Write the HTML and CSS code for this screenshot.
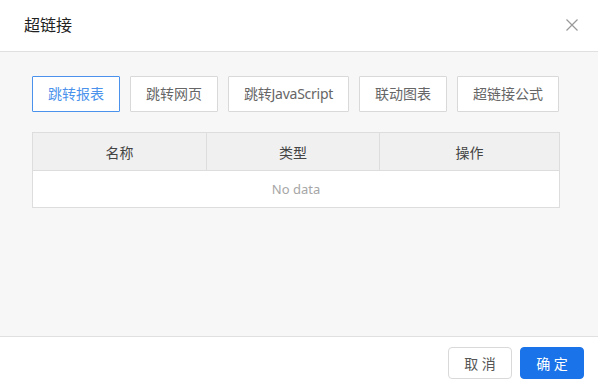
FILE: index.html
```html
<!DOCTYPE html>
<html lang="zh">
<head>
<meta charset="utf-8">
<title>超链接</title>
<link rel="stylesheet" href="styles.css">
</head>
<body>
<div class="dialog">
  <div class="header">
    <span class="title">超链接</span>
    <span class="close">
      <svg width="12" height="12" viewBox="0 0 12 12"><path d="M0.5 0.5 L11.5 11.5 M11.5 0.5 L0.5 11.5" stroke="#999" stroke-width="1.2" fill="none"/></svg>
    </span>
  </div>
  <div class="body">
    <div class="tabs">
      <button class="tab active">跳转报表</button>
      <button class="tab">跳转网页</button>
      <button class="tab tab-latin">跳转JavaScript</button>
      <button class="tab">联动图表</button>
      <button class="tab">超链接公式</button>
    </div>
    <div class="table">
      <div class="row head">
        <div class="cell">名称</div>
        <div class="cell">类型</div>
        <div class="cell">操作</div>
      </div>
      <div class="empty">No data</div>
    </div>
  </div>
  <div class="footer">
    <button class="btn">取 消</button>
    <button class="btn primary">确 定</button>
  </div>
</div>
</body>
</html>
```

FILE: styles.css
```css
* { box-sizing: border-box; }
html, body { margin: 0; padding: 0; }
body {
  width: 598px;
  height: 385px;
  overflow: hidden;
  font-family: "Noto Sans", "Noto Sans CJK SC", sans-serif;
  background: #fff;
}
.dialog {
  display: flex;
  flex-direction: column;
  height: 385px;
}
.header {
  height: 52px;
  border-bottom: 1px solid #e0e0e0;
  display: flex;
  align-items: center;
  justify-content: space-between;
  padding: 0 20px 0 24px;
  background: #fff;
}
.title {
  font-size: 16px;
  color: #222;
  font-weight: 400;
  line-height: 20px;
  margin-top: -2px;
}
.close {
  display: flex;
  width: 12px;
  height: 12px;
  margin-top: -2px;
}
.body {
  flex: 0 0 285px;
  background: #f7f7f7;
  padding: 24px 0 0 32px;
  border-bottom: 1px solid #e0e0e0;
}
.tabs {
  display: flex;
  gap: 10px;
}
.tab {
  flex: 0 0 auto;
  white-space: nowrap;
  height: 36px;
  padding: 0 15px;
  border: 1px solid #d9d9d9;
  background: #fff;
  font-family: inherit;
  font-size: 14px;
  color: #666;
  border-radius: 1px;
  line-height: 34px;
}
.tab-latin {
  letter-spacing: -0.25px;
}
.tab.active {
  border-color: #4a92ec;
  color: #4a92ec;
}
.table {
  margin-top: 20px;
  width: 528px;
  border: 1px solid #ddd;
  background: #fff;
}
.row.head {
  display: grid;
  grid-template-columns: 173px 173px 1fr;
  background: #f0f0f0;
  border-bottom: 1px solid #ddd;
  height: 38px;
}
.cell {
  display: flex;
  align-items: center;
  justify-content: center;
  font-size: 14px;
  color: #444;
  border-left: 1px solid #ddd;
}
.cell:first-child { border-left: none; }
.empty {
  height: 36px;
  display: flex;
  align-items: center;
  justify-content: center;
  font-size: 13px;
  color: #a6a6a6;
}
.footer {
  flex: 1;
  display: flex;
  justify-content: flex-end;
  align-items: flex-start;
  gap: 8px;
  padding: 10px 14px 0 0;
  background: #fff;
}
.btn {
  flex: 0 0 auto;
  white-space: nowrap;
  width: 64px;
  height: 32px;
  border: 1px solid #d9d9d9;
  border-radius: 4px;
  background: #fff;
  font-family: inherit;
  font-size: 14px;
  color: #555;
  padding: 0;
}
.btn.primary {
  background: #1a73e8;
  border-color: #1a73e8;
  color: #fff;
}
```
